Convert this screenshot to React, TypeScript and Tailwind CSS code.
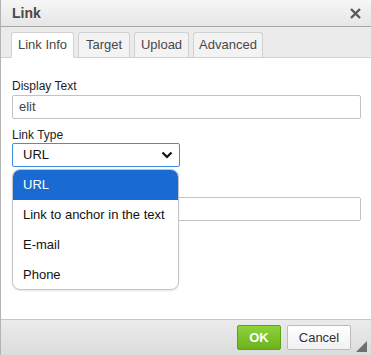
import React from "react";

export default function App() {
  const tabs = [
    { label: "Link Info", w: "w-[63px]", active: true },
    { label: "Target", w: "w-[52px]", active: false },
    { label: "Upload", w: "w-[55px]", active: false },
    { label: "Advanced", w: "w-[70px]", active: false },
  ];
  return (
    <div
      className="relative w-[371px] h-[355px] flex flex-col bg-white border-l border-[#b3b3b3] overflow-hidden"
      style={{ fontFamily: '"Liberation Sans", Arial, sans-serif' }}
    >
      {/* Title bar */}
      <div className="h-[27px] shrink-0 flex items-center justify-between pl-[11px] pr-[10px] bg-gradient-to-b from-[#f6f6f6] to-[#e6e6e6] border-b border-[#a5a5a5]">
        <span className="text-[14px] font-bold text-[#484848] leading-none">Link</span>
        <svg width="11" height="11" viewBox="0 0 11 11" className="mt-[1px]">
          <path d="M1 1 L10 10 M10 1 L1 10" stroke="#5a5a5a" strokeWidth="2.4" />
        </svg>
      </div>

      {/* Tabs strip */}
      <div className="h-[31px] shrink-0 bg-[#ebebeb] border-b border-[#d1d1d1] flex items-end pl-[10px] gap-[4px]">
        {tabs.map((t) => (
          <div
            key={t.label}
            className={`${t.w} flex items-center justify-center text-[13px] text-[#484848] border border-[#d1d1d1] rounded-t-[3px] ${
              t.active ? "bg-white border-b-white mb-[-1px] h-[26px]" : "bg-[#f3f3f3] border-b-0 h-[25px]"
            }`}
          >
            {t.label}
          </div>
        ))}
      </div>

      {/* Body */}
      <div className="flex-1 bg-white px-[11px] pt-[21px]">
        <div className="text-[12px] leading-[14px] text-[#222]">Display Text</div>
        <div className="mt-[2px] h-[24px] w-[349px] border border-[#c2c2c2] rounded-[2px] flex items-center px-[6px] text-[13px] text-[#444]">
          elit
        </div>
        <div className="mt-[9px] text-[12px] leading-[14px] text-[#222]">Link Type</div>
        <div className="mt-[1px] h-[24px] w-[168px] border border-[#3d8fe0] rounded-[2px] flex items-center justify-between pl-[10px] pr-[6px] text-[13px] text-[#111]">
          <span>URL</span>
          <svg width="12" height="8" viewBox="0 0 12 8">
            <path d="M1.5 1.5 L6 6 L10.5 1.5" stroke="#111" strokeWidth="2.2" fill="none" />
          </svg>
        </div>
        <div className="mt-[13px] h-[14px]"></div>
        <div className="mt-[3px] h-[24px] w-[349px] border border-[#c2c2c2] rounded-[2px]"></div>
      </div>

      {/* Footer */}
      <div className="h-[36px] shrink-0 border-t border-[#c7c7c7] bg-gradient-to-b from-[#ebebeb] to-[#dcdcdc] flex items-start justify-end pt-[5px] pr-[20px] gap-[6px]">
        <div className="w-[44px] h-[25px] rounded-[2px] border border-[#5aa317] bg-gradient-to-b from-[#8fd33a] to-[#6cb21c] flex items-center justify-center text-[13px] font-bold text-white">
          OK
        </div>
        <div className="w-[64px] h-[25px] rounded-[2px] border border-[#bcbcbc] bg-gradient-to-b from-[#ffffff] to-[#f1f1f1] flex items-center justify-center text-[13px] text-[#333]">
          Cancel
        </div>
      </div>
      <svg width="11" height="11" viewBox="0 0 11 11" className="absolute right-[4px] bottom-[3px]">
        <polygon points="11,0 11,11 0,11" fill="#6f6f6f" />
      </svg>

      {/* Open dropdown */}
      <div className="absolute left-[11px] top-[169px] w-[167px] h-[121px] bg-white border border-[#c4c4c4] rounded-[8px] overflow-hidden shadow-[0_1px_2px_rgba(0,0,0,0.1)]">
        <div className="h-[30px] bg-[#1a6ad4] flex items-center pl-[10px] text-[13px] text-white">URL</div>
        <div className="h-[30px] flex items-center pl-[10px] text-[13px] text-[#111]">Link to anchor in the text</div>
        <div className="h-[30px] flex items-center pl-[10px] text-[13px] text-[#111]">E-mail</div>
        <div className="h-[30px] flex items-center pl-[10px] text-[13px] text-[#111]">Phone</div>
      </div>
    </div>
  );
}
